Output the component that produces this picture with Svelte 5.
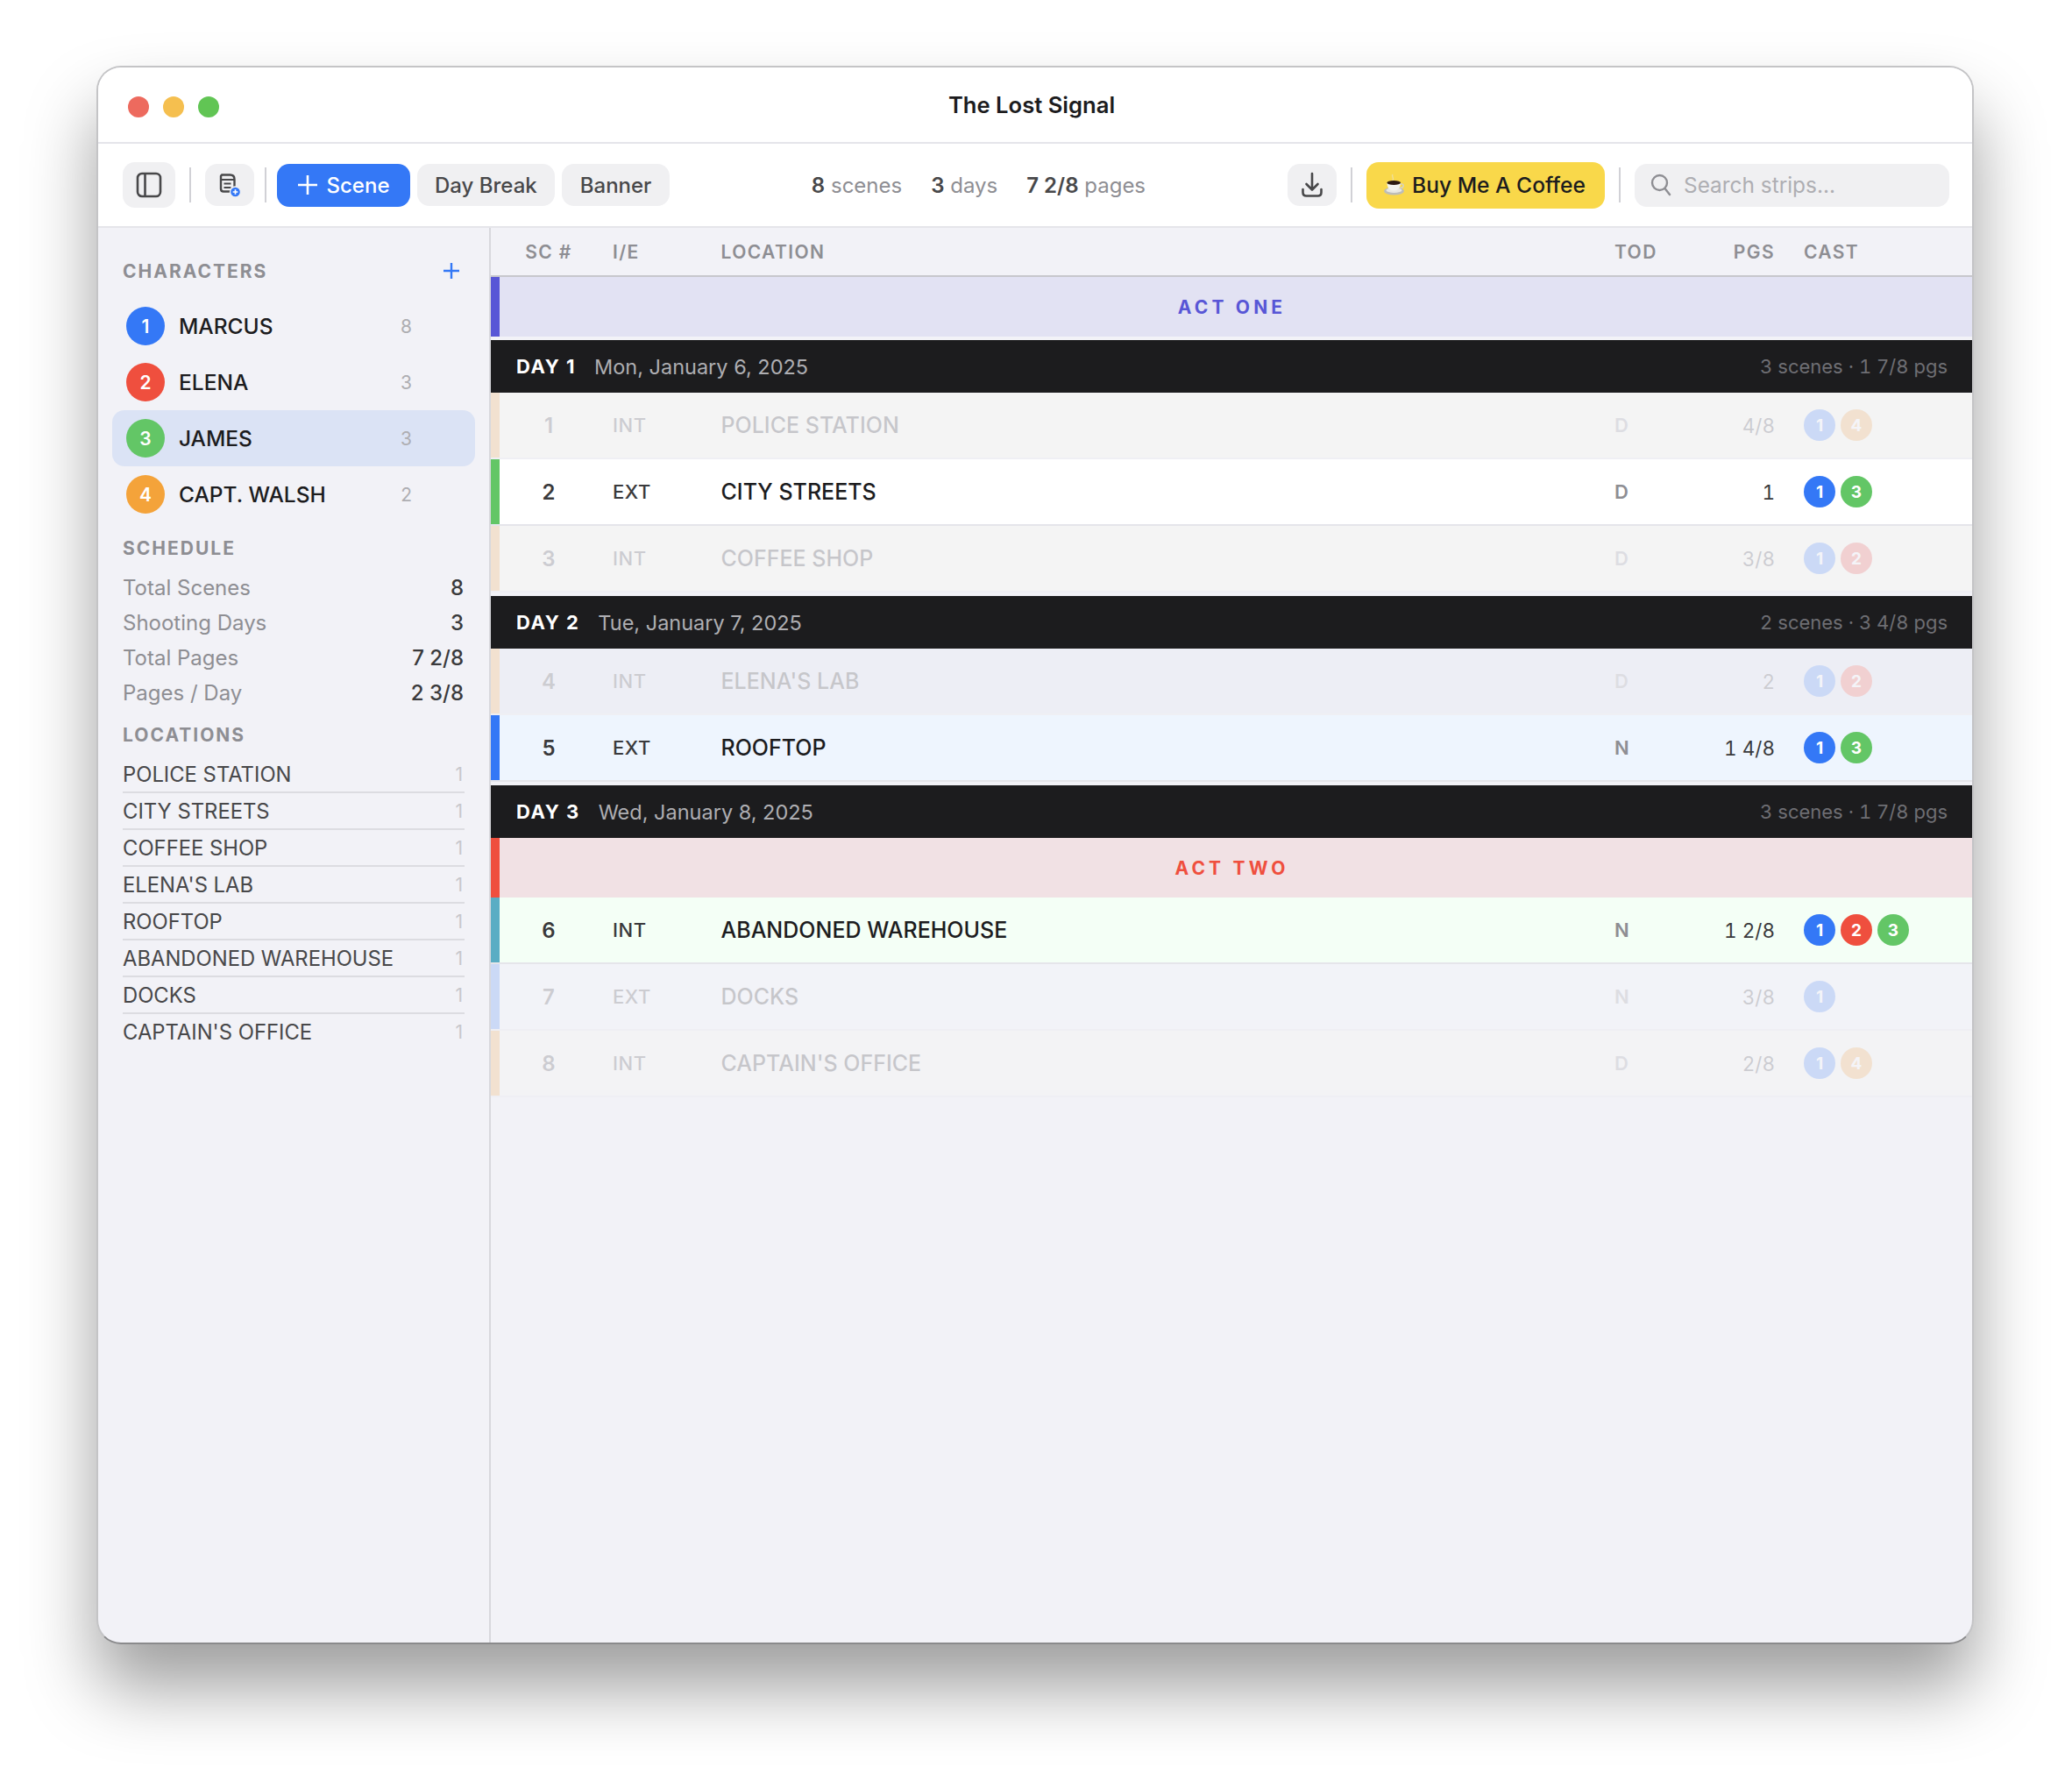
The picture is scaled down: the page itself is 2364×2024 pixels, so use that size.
<script>
  const characters = [
    { id: 1, name: 'MARCUS', count: 8, color: '#3478f6' },
    { id: 2, name: 'ELENA', count: 3, color: '#ef4f3e' },
    { id: 3, name: 'JAMES', count: 3, color: '#63c666', active: true },
    { id: 4, name: 'CAPT. WALSH', count: 2, color: '#f4a33a' }
  ];
  const colorOf = (id) => characters[id - 1].color;

  const stats = [
    ['Total Scenes', '8'],
    ['Shooting Days', '3'],
    ['Total Pages', '7 2/8'],
    ['Pages / Day', '2 3/8']
  ];

  const locations = ['POLICE STATION', 'CITY STREETS', 'COFFEE SHOP', "ELENA'S LAB", 'ROOFTOP', 'ABANDONED WAREHOUSE', 'DOCKS', "CAPTAIN'S OFFICE"];

  const strips = [
    { type: 'act', label: 'ACT ONE', color: '#5856d6', bg: '#e2e2f3' },
    { type: 'day', label: 'DAY 1', date: 'Mon, January 6, 2025', info: '3 scenes · 1 7/8 pgs', gap: true },
    { type: 'scene', no: 1, ie: 'INT', loc: 'POLICE STATION', tod: 'D', pgs: '4/8', cast: [1, 4], bar: '#f4a33a', bg: '#fcfced', dim: true },
    { type: 'scene', no: 2, ie: 'EXT', loc: 'CITY STREETS', tod: 'D', pgs: '1', cast: [1, 3], bar: '#63c666', bg: '#ffffff' },
    { type: 'scene', no: 3, ie: 'INT', loc: 'COFFEE SHOP', tod: 'D', pgs: '3/8', cast: [1, 2], bar: '#f4a33a', bg: '#fcfced', dim: true },
    { type: 'day', label: 'DAY 2', date: 'Tue, January 7, 2025', info: '2 scenes · 3 4/8 pgs', gap: true },
    { type: 'scene', no: 4, ie: 'INT', loc: "ELENA'S LAB", tod: 'D', pgs: '2', cast: [1, 2], bar: '#f4a33a', bg: '#dee3f2', dim: true },
    { type: 'scene', no: 5, ie: 'EXT', loc: 'ROOFTOP', tod: 'N', pgs: '1 4/8', cast: [1, 3], bar: '#3478f6', bg: '#eef5fe' },
    { type: 'day', label: 'DAY 3', date: 'Wed, January 8, 2025', info: '3 scenes · 1 7/8 pgs', gap: true },
    { type: 'act', label: 'ACT TWO', color: '#ef4f3e', bg: '#f1e1e4' },
    { type: 'scene', no: 6, ie: 'INT', loc: 'ABANDONED WAREHOUSE', tod: 'N', pgs: '1 2/8', cast: [1, 2, 3], bar: '#5aadc4', bg: '#f4fff6' },
    { type: 'scene', no: 7, ie: 'EXT', loc: 'DOCKS', tod: 'N', pgs: '3/8', cast: [1], bar: '#3478f6', bg: '#f2f7ff', dim: true },
    { type: 'scene', no: 8, ie: 'INT', loc: "CAPTAIN'S OFFICE", tod: 'D', pgs: '2/8', cast: [1, 4], bar: '#f4a33a', bg: '#f7f7f2', dim: true }
  ];
</script>

<div class="page">
<div class="window">
  <header class="titlebar">
    <div class="lights">
      <span class="light red"></span>
      <span class="light yellow"></span>
      <span class="light green"></span>
    </div>
    <div class="title">The Lost Signal</div>
  </header>

  <div class="toolbar">
    <button class="tool tool-lg">
      <svg width="30" height="30" viewBox="0 0 30 30" fill="none" stroke="#48484a" stroke-width="2.6">
        <rect x="2" y="2" width="26" height="26" rx="5" />
        <path d="M10.5 2v26" />
      </svg>
    </button>
    <span class="sep"></span>
    <button class="tool tool-sm">
      <svg width="30" height="32" viewBox="0 0 30 32" fill="none">
        <path d="M6 4.5h9.5c3 0 5 2 5 5v11c0 2-1 3-3 3H8c-2 0-3-1-3-3V6z" stroke="#48484a" stroke-width="2.4" stroke-linejoin="round" />
        <path d="M5 10h15M8.5 14.5h8M8.5 19h8" stroke="#48484a" stroke-width="2.2" />
        <circle cx="21.5" cy="24" r="6" fill="#3478f6" stroke="#f0f0f2" stroke-width="1.4" />
        <path d="M18.7 24h5.600M21.5 21.2v5.600" stroke="#fff" stroke-width="1.7" />
      </svg>
    </button>
    <span class="sep sep-tight"></span>
    <button class="btn primary">
      <svg width="24" height="24" viewBox="0 0 24 24" fill="none" stroke="#fff" stroke-width="2.6">
        <path d="M12 1v22M1 12h22" />
      </svg>
      Scene
    </button>
    <button class="btn">Day Break</button>
    <button class="btn">Banner</button>

    <div class="stats">
      <span><b>8</b> scenes</span>
      <span><b>3</b> days</span>
      <span><b>7 2/8</b> pages</span>
    </div>

    <button class="tool tool-sm">
      <svg width="26" height="30" viewBox="0 0 26 30" fill="none" stroke="#48484a" stroke-width="2.6" stroke-linecap="round" stroke-linejoin="round">
        <path d="M13 2v18M6.5 14l6.5 6.5 6.500-6.500" />
        <path d="M2.500 20v3.500c0 2.500 1.500 4 4 4h13c2.500 0 4-1.500 4-4V20" />
      </svg>
    </button>
    <span class="sep"></span>
    <button class="coffee">
      <svg width="26" height="26" viewBox="0 0 26 26">
        <path d="M11 1c-2 2.500 2 3.500 0 7" fill="none" stroke="#efdf9a" stroke-width="1.400" />
        <ellipse cx="12.500" cy="20" rx="11.500" ry="4.500" fill="#bdbdb8" />
        <ellipse cx="12.500" cy="19" rx="9" ry="3" fill="#e8e8e3" />
        <path d="M4.500 10.500h15.500c0 4.500-2 9-7.800 9S4.500 15 4.500 10.500z" fill="#f4f4ee" />
        <path d="M20 12c4.500-1 4.500 4.500-1 4.500" fill="none" stroke="#d2d2cc" stroke-width="1.400" />
        <ellipse cx="12.200" cy="10.500" rx="7.800" ry="2.600" fill="#2e1c12" />
      </svg>
      Buy Me A Coffee
    </button>
    <span class="sep"></span>
    <div class="search">
      <svg width="24" height="26" viewBox="0 0 24 26" fill="none" stroke="#8e8e93" stroke-width="2.400" stroke-linecap="round">
        <circle cx="10.500" cy="10.500" r="8.500" />
        <path d="M16.500 17l5.500 7" />
      </svg>
      <span>Search strips...</span>
    </div>
  </div>

  <div class="body">
    <aside class="sidebar">
      <div class="section-head chars-head">
        <span>CHARACTERS</span>
        <svg width="18" height="18" viewBox="0 0 18 18" fill="none" stroke="#3478f6" stroke-width="2.400">
          <path d="M9 0v18M0 9h18" />
        </svg>
      </div>
      <div class="char-list">
        {#each characters as c}
          <div class="char" class:active={c.active}>
            <span class="char-badge" style="background: {c.color}">{c.id}</span>
            <span class="char-name">{c.name}</span>
            <span class="char-count">{c.count}</span>
          </div>
        {/each}
      </div>

      <div class="section-head schedule-head"><span>SCHEDULE</span></div>
      <div class="stat-list">
        {#each stats as [label, value]}
          <div class="stat">
            <span class="stat-label">{label}</span>
            <span class="stat-value">{value}</span>
          </div>
        {/each}
      </div>

      <div class="section-head locations-head"><span>LOCATIONS</span></div>
      <div class="loc-list">
        {#each locations as l}
          <div class="loc-row">
            <span>{l}</span>
            <span class="loc-count">1</span>
          </div>
        {/each}
      </div>
    </aside>

    <main class="main">
      <div class="grid columns">
        <span></span>
        <span class="num-head">SC #</span>
        <span>I/E</span>
        <span>LOCATION</span>
        <span>TOD</span>
        <span class="right">PGS</span>
        <span class="cast-head">CAST</span>
      </div>

      {#each strips as s}
        {#if s.type === 'act'}
          <div class="act" style="background: {s.bg}; color: {s.color}">
            <span class="bar" style="background: {s.color}"></span>
            <span class="act-label">{s.label}</span>
          </div>
        {:else if s.type === 'day'}
          <div class="day" class:gap={s.gap}>
            <b>{s.label}</b>
            <span class="day-date">{s.date}</span>
            <span class="day-info">{s.info}</span>
          </div>
        {:else}
          <div class="grid scene" class:dim={s.dim} style="background: {s.bg}">
            <span class="bar" style="background: {s.bar}"></span>
            <span class="no">{s.no}</span>
            <span class="ie">{s.ie}</span>
            <span class="loc">{s.loc}</span>
            <span class="tod">{s.tod}</span>
            <span class="pgs">{s.pgs}</span>
            <span class="cast">
              {#each s.cast as id}
                <span class="cast-badge" style="background: {colorOf(id)}">{id}</span>
              {/each}
            </span>
          </div>
        {/if}
      {/each}
    </main>
  </div>
</div>
</div>

<style>
  :global(body) {
    margin: 0;
    background: #fff;
    font-family: Inter, "Liberation Sans", sans-serif;
  }

  .page {
    box-sizing: border-box;
    height: 2024px;
    padding: 75px 0 0 110px;
    overflow: hidden;
  }

  .window {
    box-sizing: border-box;
    width: 2142px;
    height: 1801px;
    display: flex;
    flex-direction: column;
    background: #f2f2f7;
    border: 2px solid #c4c4c6;
    border-bottom-color: #8a8a8c;
    border-radius: 28px;
    box-shadow: 0 50px 80px rgba(0, 0, 0, 0.38);
    overflow: hidden;
  }

  .titlebar {
    flex: none;
    height: 85px;
    display: flex;
    align-items: center;
    padding: 0 146px 0 34px;
    background: #fff;
    border-bottom: 2px solid #e5e5ea;
  }

  .lights {
    display: flex;
    gap: 16px;
    margin-top: 5px;
  }

  .light {
    width: 24px;
    height: 24px;
    border-radius: 50%;
  }

  .red { background: #ed6a5e; }
  .yellow { background: #f5bf4f; }
  .green { background: #61c554; }

  .title {
    flex: 1;
    text-align: center;
    font-size: 25.6px;
    font-weight: 600;
    color: #1c1c1e;
  }

  .toolbar {
    flex: none;
    height: 94px;
    display: flex;
    align-items: center;
    padding: 0 26px 0 28px;
    background: #fff;
    border-bottom: 2px solid #e5e5ea;
  }

  button {
    font-family: inherit;
    border: none;
    padding: 0;
  }

  .tool {
    display: flex;
    align-items: center;
    justify-content: center;
    background: #f0f0f2;
    border-radius: 14px;
  }

  .tool-lg { width: 60px; height: 52px; }
  .tool-sm { width: 56px; height: 48px; }

  .sep {
    flex: none;
    width: 2px;
    height: 40px;
    margin: 0 16px;
    background: #d1d1d6;
  }

  .sep-tight { margin: 0 12px; }

  .btn {
    height: 48px;
    padding: 0 20.500px;
    margin-right: 8px;
    display: flex;
    align-items: center;
    background: #f0f0f2;
    border-radius: 14px;
    font-size: 24px;
    font-weight: 500;
    color: #48484a;
  }

  .btn.primary {
    height: 49px;
    padding: 0 23px 0 22.500px;
    gap: 10px;
    background: #3478f6;
    color: #fff;
  }

  .stats {
    flex: 1;
    display: flex;
    justify-content: center;
    gap: 33px;
    margin-right: 8px;
    font-size: 24px;
    color: #8e8e93;
  }

  .stats b {
    font-weight: 600;
    color: #48484a;
  }

  .coffee {
    height: 53px;
    width: 272px;
    padding-left: 19px;
    display: flex;
    align-items: center;
    gap: 7px;
    background: #f9d84a;
    border-radius: 14px;
    font-size: 24.600px;
    font-weight: 500;
    color: #1c1c1e;
  }

  .search {
    width: 359px;
    height: 49px;
    box-sizing: border-box;
    padding-left: 18px;
    display: flex;
    align-items: center;
    gap: 14px;
    background: #f0f0f2;
    border-radius: 14px;
    font-size: 24.400px;
    color: #aeaeb2;
  }

  .body {
    flex: 1;
    display: flex;
    min-height: 0;
  }

  .sidebar {
    flex: none;
    box-sizing: border-box;
    width: 448px;
    padding: 34px 16px 0;
    border-right: 2px solid #d8d8dd;
  }

  .section-head {
    height: 30px;
    padding: 0 12px;
    display: flex;
    align-items: center;
    justify-content: space-between;
    font-size: 21px;
    font-weight: 700;
    letter-spacing: 2px;
    color: #8e8e93;
  }

  .chars-head { padding-right: 18px; margin-bottom: 16px; }
  .schedule-head { margin-top: 14px; margin-bottom: 10px; }
  .locations-head { margin-top: 13px; margin-bottom: 10px; }

  .char {
    height: 64px;
    box-sizing: border-box;
    padding: 0 72px 0 16px;
    display: flex;
    align-items: center;
    border-radius: 14px;
  }

  .char.active { background: #dbe3f5; }

  .char-badge {
    flex: none;
    width: 44px;
    height: 44px;
    display: flex;
    align-items: center;
    justify-content: center;
    border-radius: 50%;
    font-size: 21px;
    font-weight: 600;
    color: #fff;
  }

  .char-name {
    flex: 1;
    margin-left: 16px;
    font-size: 24.500px;
    font-weight: 500;
    color: #1c1c1e;
  }

  .char-count {
    font-size: 21px;
    color: #aeaeb2;
  }

  .stat {
    height: 40px;
    padding: 0 13px 0 12px;
    display: flex;
    align-items: center;
    justify-content: space-between;
    font-size: 24px;
  }

  .stat-label { color: #8e8e93; }
  .stat-value { font-weight: 500; color: #3a3a3c; }

  .loc-row {
    height: 40px;
    margin: 0 12px 2px;
    padding-right: 2px;
    display: flex;
    align-items: center;
    justify-content: space-between;
    box-shadow: 0 2px 0 #dcdce1;
    font-size: 23.800px;
    color: #48484a;
  }

  .loc-row:last-child { box-shadow: none; }

  .loc-count {
    font-size: 21px;
    color: #c7c7cc;
  }

  .main {
    flex: 1;
    min-width: 0;
  }

  .grid {
    display: grid;
    grid-template-columns: 10px 129px 123.5px 1fr 101px 82px 225px;
    align-items: center;
  }

  .columns {
    height: 54px;
    border-bottom: 2px solid #c7c7cc;
    font-size: 21px;
    font-weight: 600;
    letter-spacing: 1.400px;
    color: #8e8e93;
  }

  .num-head {
    padding-right: 17px;
    text-align: center;
  }

  .right { text-align: right; }
  .cast-head { padding-left: 33px; }

  .bar {
    align-self: stretch;
    width: 10px;
  }

  .act {
    height: 68px;
    display: flex;
    align-items: center;
  }

  .act-label {
    flex: 1;
    padding-right: 9px;
    text-align: center;
    font-size: 21px;
    font-weight: 700;
    letter-spacing: 4.200px;
  }

  .day {
    height: 60px;
    box-sizing: border-box;
    padding: 0 28px 0 29px;
    display: flex;
    align-items: center;
    background: #1c1c1e;
    font-size: 23.500px;
    color: #fff;
  }

  .day.gap { margin-top: 4px; }

  .day b {
    font-weight: 700;
    font-size: 22px;
    letter-spacing: 1.500px;
  }

  .day-date {
    flex: 1;
    margin-left: 21px;
    color: #aeaeb2;
  }

  .day-info {
    font-size: 22px;
    font-variant-numeric: tabular-nums;
    color: #6e6e73;
  }

  .scene {
    height: 76px;
    box-sizing: border-box;
    border-bottom: 2px solid #e5e5ea;
    font-size: 25px;
    color: #1c1c1e;
  }

  .scene.dim { opacity: 0.2; }

  .no {
    padding-right: 17px;
    text-align: center;
    font-size: 24px;
    font-weight: 600;
    color: #3a3a3c;
  }

  .ie {
    font-size: 22px;
    font-weight: 500;
    letter-spacing: 0.600px;
    color: #3a3a3c;
  }

  .loc { font-weight: 500; }

  .tod {
    font-size: 22px;
    font-weight: 600;
    color: #8e8e93;
  }

  .pgs {
    text-align: right;
    font-size: 22.500px;
    font-variant-numeric: tabular-nums;
    color: #3a3a3c;
  }

  .cast {
    padding-left: 33px;
    display: flex;
    gap: 6px;
  }

  .cast-badge {
    width: 36px;
    height: 36px;
    display: flex;
    align-items: center;
    justify-content: center;
    border-radius: 50%;
    font-size: 19px;
    font-weight: 700;
    color: #fff;
  }
</style>
